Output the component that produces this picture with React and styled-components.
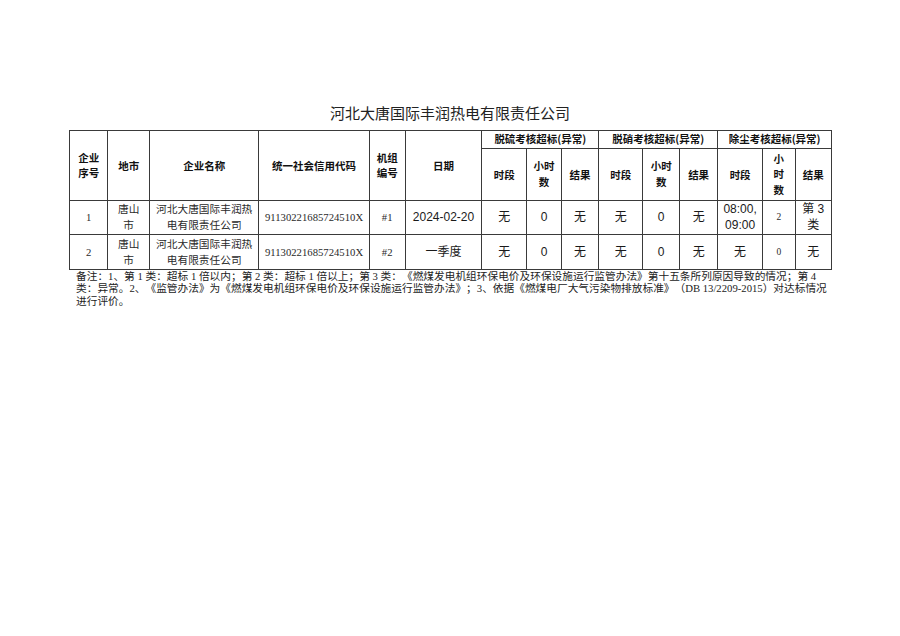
import React from 'react';
import styled, { createGlobalStyle, css } from 'styled-components';

const GlobalStyle = createGlobalStyle`
  html, body {
    margin: 0;
    padding: 0;
    background: #fff;
  }
`;

const CJK = '"Noto Sans CJK SC"';

const StyledPage = styled.div`
  width: 762px;
  margin: 0 auto;
  padding-top: 102px;
  color: #1a1a1a;
`;

const Title = styled.h1`
  margin: 0 0 6px;
  height: 22px;
  font-family: ${CJK}, sans-serif;
  font-size: 15px;
  font-weight: 400;
  line-height: 22px;
  text-align: center;
  color: #222;
`;

const Sheet = styled.table`
  width: 762px;
  table-layout: fixed;
  border-collapse: collapse;
  border: 1px solid #3a3a3a;
`;

const Row = styled.tr`
  height: ${({ $h }) => $h}px;
`;

const HeadCell = styled.th`
  padding: 0;
  border: 1px solid #3a3a3a;
  font-family: ${CJK}, sans-serif;
  font-size: 10.5px;
  font-weight: 700;
  line-height: ${({ $lh }) => $lh || 15}px;
  text-align: center;
  vertical-align: middle;
  color: #111;
`;

const kinds = {
  serif: css`
    font-family: 'Liberation Serif', ${CJK}, serif;
    font-size: 10.7px;
    color: #2a2a2a;
  `,
  sans: css`
    font-family: 'Liberation Sans', ${CJK}, sans-serif;
    font-size: 12px;
    color: #1a1a1a;
  `,
  small: css`
    font-family: 'Liberation Serif', ${CJK}, serif;
    font-size: 9.5px;
    color: #2a2a2a;
  `,
};

const Cell = styled.td`
  padding: 0;
  border: 1px solid #3a3a3a;
  line-height: 16px;
  text-align: center;
  vertical-align: middle;
  ${({ $kind }) => kinds[$kind || 'serif']};
`;

const Note = styled.p`
  margin: 0;
  padding-left: 7px;
  font-family: 'Liberation Serif', ${CJK}, serif;
  font-size: 10.7px;
  line-height: 12.6px;
  color: #222;
  white-space: nowrap;
  text-spacing-trim: space-all;
`;

const colWidths = [38.4, 41.6, 109.4, 110.3, 36, 76.7, 45, 34.3, 37.7, 44, 36.6, 38.4, 44.6, 32.7, 36.3];

const groups = ['脱硫考核超标(异常)', '脱硝考核超标(异常)', '除尘考核超标(异常)'];

const rows = [
  {
    no: '1',
    unit: '#1',
    date: '2024-02-20',
    cells: ['无', '0', '无', '无', '0', '无'],
    dust: [
      { kind: 'sans', text: ['08:00,', '09:00'] },
      { kind: 'small', text: ['2'] },
      { kind: 'sans', text: ['第 3', '类'] },
    ],
  },
  {
    no: '2',
    unit: '#2',
    date: '一季度',
    cells: ['无', '0', '无', '无', '0', '无'],
    dust: [
      { kind: 'sans', text: ['无'] },
      { kind: 'small', text: ['0'] },
      { kind: 'sans', text: ['无'] },
    ],
  },
];

const Lines = ({ text }) =>
  text.map((line, i) => (
    <React.Fragment key={i}>
      {i > 0 && <br />}
      {line}
    </React.Fragment>
  ));

const App = () => (
  <>
    <GlobalStyle />
    <StyledPage>
      <Title>河北大唐国际丰润热电有限责任公司</Title>
      <Sheet>
        <colgroup>
          {colWidths.map((w, i) => (
            <col key={i} style={{ width: `${w}px` }} />
          ))}
        </colgroup>
        <thead>
          <Row $h={17.5}>
            <HeadCell rowSpan={2}>
              企业
              <br />
              序号
            </HeadCell>
            <HeadCell rowSpan={2}>地市</HeadCell>
            <HeadCell rowSpan={2}>企业名称</HeadCell>
            <HeadCell rowSpan={2}>统一社会信用代码</HeadCell>
            <HeadCell rowSpan={2}>
              机组
              <br />
              编号
            </HeadCell>
            <HeadCell rowSpan={2}>日期</HeadCell>
            {groups.map((g) => (
              <HeadCell key={g} colSpan={3} $lh={16}>
                {g}
              </HeadCell>
            ))}
          </Row>
          <Row $h={52.3}>
            <HeadCell>时段</HeadCell>
            <HeadCell $lh={16}>
              小时
              <br />数
            </HeadCell>
            <HeadCell>结果</HeadCell>
            <HeadCell>时段</HeadCell>
            <HeadCell $lh={16}>
              小时
              <br />数
            </HeadCell>
            <HeadCell>结果</HeadCell>
            <HeadCell>时段</HeadCell>
            <HeadCell $lh={15.5}>
              小<br />时<br />数
            </HeadCell>
            <HeadCell>结果</HeadCell>
          </Row>
        </thead>
        <tbody>
          {rows.map((r) => (
            <Row key={r.no} $h={34.4}>
              <Cell>{r.no}</Cell>
              <Cell>
                唐山
                <br />市
              </Cell>
              <Cell>
                河北大唐国际丰润热
                <br />
                电有限责任公司
              </Cell>
              <Cell>91130221685724510X</Cell>
              <Cell>{r.unit}</Cell>
              <Cell $kind="sans">{r.date}</Cell>
              {r.cells.map((c, i) => (
                <Cell key={i} $kind="sans">
                  {c}
                </Cell>
              ))}
              {r.dust.map((d, i) => (
                <Cell key={`d${i}`} $kind={d.kind}>
                  <Lines text={d.text} />
                </Cell>
              ))}
            </Row>
          ))}
        </tbody>
      </Sheet>
      <Note>
        备注：1、第 1 类：超标 1 倍以内；第 2 类：超标 1 倍以上；第 3 类：《燃煤发电机组环保电价及环保设施运行监管办法》第十五条所列原因导致的情况；第 4
        <br />
        类：异常。2、《监管办法》为《燃煤发电机组环保电价及环保设施运行监管办法》；3、依据《燃煤电厂大气污染物排放标准》（DB 13/2209-2015）对达标情况
        <br />
        进行评价。
      </Note>
    </StyledPage>
  </>
);

export default App;
